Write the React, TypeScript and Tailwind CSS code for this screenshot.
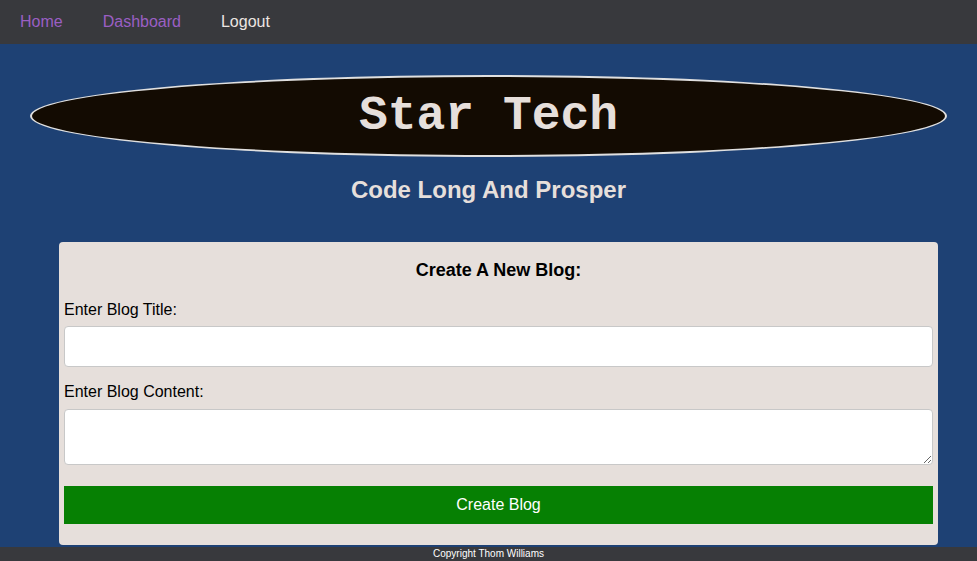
import React from "react";

export default function App() {
  return (
    <div className="min-h-screen flex flex-col bg-[#1e4174] font-['Liberation_Sans',Arial,sans-serif]">
      <nav className="h-[44px] bg-[#38393d] flex items-center pl-0 text-[16px]">
        <a className="px-5 text-[#9b5fc4]" href="#">Home</a>
        <a className="px-5 text-[#9b5fc4]" href="#">Dashboard</a>
        <a className="px-5 text-[#ece6e2]" href="#">Logout</a>
      </nav>
      <main className="flex-1 flex flex-col pt-[31px]">
        <header className="mx-[30px] h-[82px] rounded-[50%] border-2 border-[#e0e0e0] bg-[#130b02] flex items-center justify-center">
          <h1 className="font-['Liberation_Mono','Courier_New',monospace] font-bold text-[48px] leading-none text-[#e6dfdb]">
            Star Tech
          </h1>
        </header>
        <h2 className="mt-[19px] h-[28px] leading-[28px] text-center text-[24px] font-bold text-[#e6dfdb]">
          Code Long And Prosper
        </h2>
        <section className="mt-[38px] ml-[59px] w-[879px] bg-[#e6dfdb] rounded-[4px] px-[5px] pt-[17px] pb-[21px] flex flex-col">
          <h3 className="h-[22px] leading-[22px] text-center text-[18px] font-bold text-black">
            Create A New Blog:
          </h3>
          <label className="mt-[20px] h-[18px] leading-[18px] text-[16px] text-black">
            Enter Blog Title:
          </label>
          <input
            type="text"
            className="mt-[7px] h-[41px] w-full bg-white border border-[#c8c8c8] rounded-[4px] px-2 outline-none"
          />
          <label className="mt-[16px] h-[18px] leading-[18px] text-[16px] text-black">
            Enter Blog Content:
          </label>
          <textarea className="mt-[8px] h-[56px] w-full bg-white border border-[#c8c8c8] rounded-[4px] px-2 outline-none block" />
          <button className="mt-[21px] h-[38px] w-full bg-[#068003] text-white text-[16px]">
            Create Blog
          </button>
        </section>
        <div className="h-[2px]" />
      </main>
      <footer className="h-[14px] bg-[#38393d] flex items-center justify-center text-[10px] leading-[14px] text-white font-medium">
        Copyright Thom Williams
      </footer>
    </div>
  );
}
